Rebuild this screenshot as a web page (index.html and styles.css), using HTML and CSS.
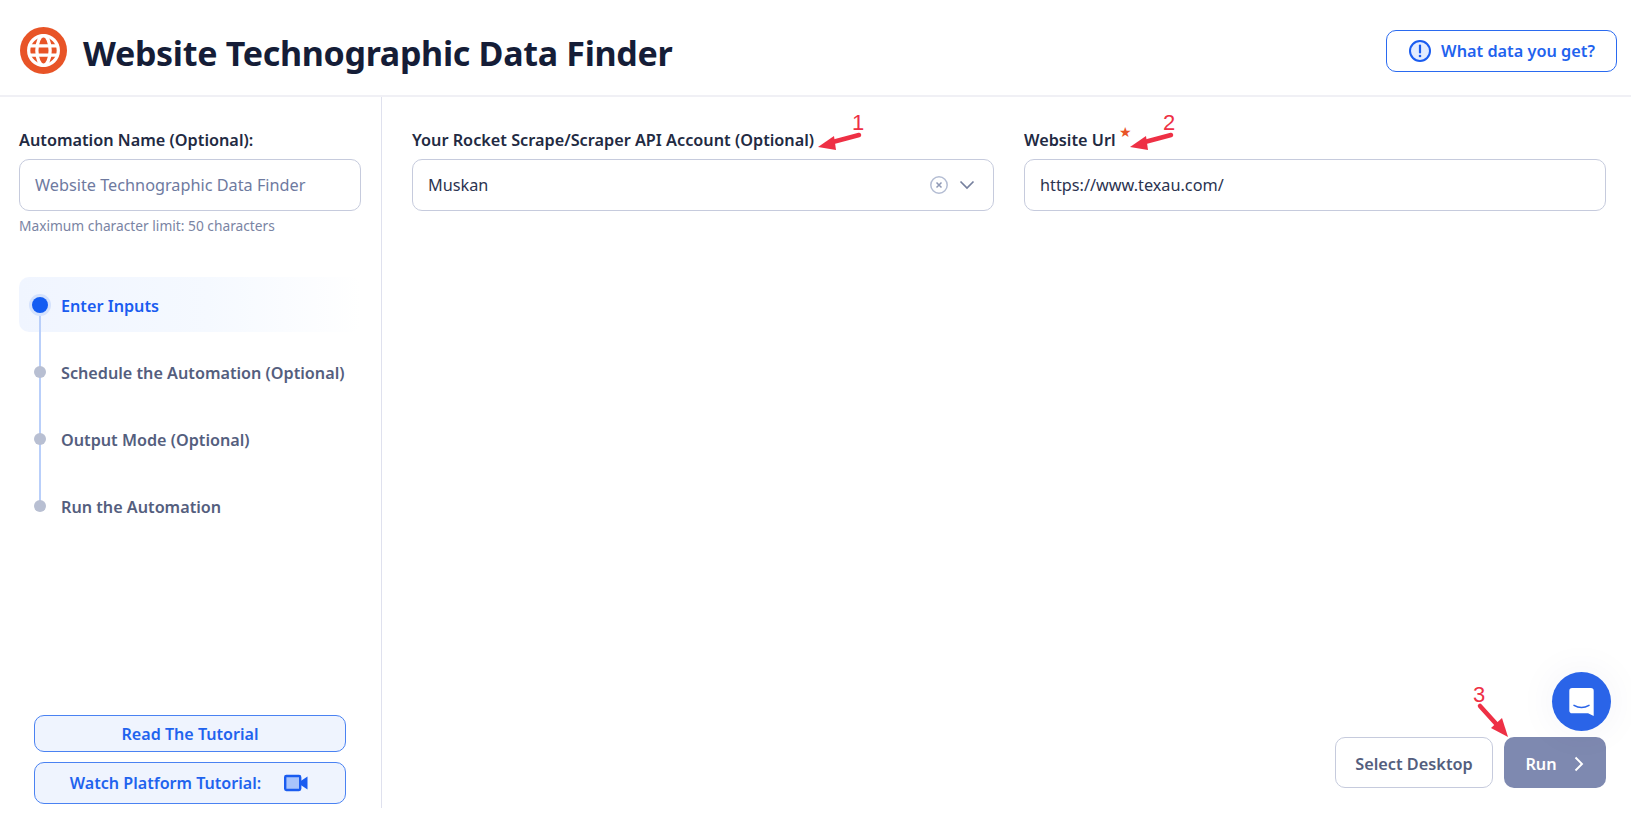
FILE: index.html
```html
<!DOCTYPE html>
<html lang="en">
<head>
<meta charset="utf-8">
<title>Website Technographic Data Finder</title>
<link rel="stylesheet" href="styles.css">
</head>
<body>
<header class="topbar">
  <div class="brand">
    <svg class="brand-icon" viewBox="0 0 46 46">
      <circle cx="23" cy="23" r="23" fill="#e85427"/>
      <g fill="none" stroke="#fff" stroke-width="3.2">
        <circle cx="23" cy="23" r="14.5"/>
        <ellipse cx="23" cy="23" rx="6.5" ry="14.5"/>
        <path d="M9.5 18.5h27M9.5 27.5h27"/>
      </g>
    </svg>
    <h1 class="title">Website Technographic Data Finder</h1>
  </div>
  <button class="info-btn">
    <svg class="info-icon" viewBox="0 0 24 24">
      <circle cx="12" cy="12" r="10" fill="#e3ecff" stroke="#1a5cf0" stroke-width="2"/>
      <path d="M12 6.5v7" stroke="#1a5cf0" stroke-width="2.2" stroke-linecap="round"/>
      <circle cx="12" cy="17" r="1.3" fill="#1a5cf0"/>
    </svg>
    <span class="info-text">What data you get?</span>
  </button>
</header>
<div class="workspace">
  <aside class="sidebar">
    <div class="name-block">
      <label class="label">Automation Name (Optional):</label>
      <div class="field placeholder">Website Technographic Data Finder</div>
      <p class="hint">Maximum character limit: 50 characters</p>
    </div>
    <ol class="steps">
      <li class="step active"><span class="dot"></span>Enter Inputs</li>
      <li class="step"><span class="dot"></span>Schedule the Automation (Optional)</li>
      <li class="step"><span class="dot"></span>Output Mode (Optional)</li>
      <li class="step last"><span class="dot"></span>Run the Automation</li>
    </ol>
    <div class="tutorials">
      <button class="tut-btn short">Read The Tutorial</button>
      <button class="tut-btn tall">Watch Platform Tutorial:
        <svg class="video-icon" viewBox="0 0 24 18">
          <rect x="1.2" y="2" width="15" height="14" rx="1.2" fill="#a9c4fb" stroke="#1a5cf0" stroke-width="2.4"/>
          <path d="M16 7.5 23.5 2.5v13l-7.5-5z" fill="#1a5cf0"/>
        </svg>
      </button>
    </div>
  </aside>
  <main class="content">
    <div class="form-grid">
      <div class="form-col">
        <label class="label">Your Rocket Scrape/Scraper API Account (Optional)</label>
        <div class="field select">
          <span>Muskan</span>
          <span class="select-icons">
            <svg class="clear-icon" viewBox="0 0 20 20" fill="none" stroke="#b4bdd3" stroke-width="1.5">
              <circle cx="10" cy="10" r="8.2"/>
              <path d="M7.5 7.5l5 5M12.5 7.5l-5 5" stroke="#8f99b5"/>
            </svg>
            <svg class="chev-icon" viewBox="0 0 16 10" fill="none" stroke="#76809e" stroke-width="1.7">
              <path d="M1.5 1.5 8 8l6.5-6.5"/>
            </svg>
          </span>
        </div>
      </div>
      <div class="form-col">
        <label class="label">Website Url</label>
        <div class="field">https://www.texau.com/</div>
      </div>
    </div>
    <div class="actions">
      <button class="btn-outline">Select Desktop</button>
      <button class="btn-run">Run
        <svg class="run-chev" viewBox="0 0 10 16" fill="none" stroke="#fff" stroke-width="1.9"><path d="M1.5 1.5 8 8l-6.5 6.5"/></svg>
      </button>
    </div>
  </main>
</div>

<span class="req-star">★</span>
<span class="mark mark-1">1</span>
<span class="mark mark-2">2</span>
<span class="mark mark-3">3</span>
<svg class="arrows" viewBox="0 0 1631 818" fill="#ee3045" stroke="none">
  <path d="M859 135 829 143" stroke="#ee3045" stroke-width="4.5" stroke-linecap="round"/>
  <path d="M818 147 834 136 836 150z"/>
  <path d="M1171 135 1141 143" stroke="#ee3045" stroke-width="4.5" stroke-linecap="round"/>
  <path d="M1130 147 1146 136 1148 150z"/>
  <path d="M1480 706 1499 727" stroke="#ee3045" stroke-width="4.5" stroke-linecap="round"/>
  <path d="M1508 737 1491 728 1502 718z"/>
</svg>
<button class="chat-bubble" aria-label="Chat">
  <svg viewBox="0 0 28 32" class="chat-icon">
    <path d="M4 1h20a3 3 0 0 1 3 3v27l-6-3H4a3 3 0 0 1-3-3V4a3 3 0 0 1 3-3z" fill="#fff"/>
    <path d="M6 19.5c5 3 11 3 16 0" fill="none" stroke="#2a64e8" stroke-width="1.6" stroke-linecap="round"/>
  </svg>
</button>
</body>
</html>
```
FILE: styles.css
```css
* { box-sizing: border-box; }
html, body { margin: 0; height: 818px; overflow: hidden; }
body {
  position: relative;
  background: #fff;
  font-family: "Noto Sans", "Open Sans", sans-serif;
  color: #1a2238;
}
button { font-family: inherit; cursor: pointer; }

.topbar {
  height: 97px;
  border-bottom: 2px solid #f0f0f5;
  padding: 6px 14px 0 20px;
  display: flex;
  align-items: center;
  justify-content: space-between;
}
.brand { display: flex; align-items: center; gap: 16px; }
.brand-icon { width: 47px; height: 47px; display: block; }
.title {
  margin: 0;
  padding-top: 4px;
  font-size: 34px;
  line-height: 46px;
  font-weight: 700;
  letter-spacing: -0.3px;
  color: #151d37;
}
.info-btn {
  width: 231px;
  height: 42px;
  background: #fff;
  border: 1px solid #2a6af0;
  border-radius: 10px;
  color: #1f63ee;
  font-size: 16.3px;
  font-weight: 600;
  display: flex;
  align-items: center;
  justify-content: center;
  gap: 9px;
  padding: 0;
}
.info-text { padding-top: 1px; }
.info-icon { width: 24px; height: 24px; }

.workspace { display: flex; height: 711px; }
.sidebar {
  width: 382px;
  border-right: 1px solid #dfe1ee;
  padding: 32px 20px 4px 19px;
  display: flex;
  flex-direction: column;
}
.label {
  display: block;
  font-size: 16.25px;
  line-height: 22px;
  font-weight: 600;
  color: #222a42;
  margin-bottom: 8px;
  white-space: nowrap;
}
.field {
  height: 52px;
  border: 1px solid #c6cbdd;
  border-radius: 10px;
  padding: 0 15px;
  display: flex;
  align-items: center;
  font-size: 16.25px;
  color: #2b3350;
  background: #fff;
}
.placeholder { color: #6e7a9f; width: 342px; white-space: nowrap; }
.hint { margin: 6px 0 0; font-size: 13.75px; line-height: 18px; color: #7a84a3; }

.steps { list-style: none; margin: 42px 0 0; padding: 0; width: 342px; }
.step {
  position: relative;
  height: 55px;
  margin-bottom: 12px;
  padding: 2px 0 0 42px;
  display: flex;
  align-items: center;
  font-size: 16.2px;
  font-weight: 600;
  color: #545e7e;
  white-space: nowrap;
  border-radius: 10px;
}
.step::before {
  content: "";
  position: absolute;
  left: 20px;
  top: 28px;
  width: 2px;
  height: 67px;
  background: #b9cffa;
}
.step.last::before { display: none; }
.dot {
  position: absolute;
  left: 15px;
  top: 22px;
  width: 12px;
  height: 12px;
  border-radius: 50%;
  background: #b8bfd2;
  z-index: 1;
}
.step.active {
  color: #1a5cf0;
  background: linear-gradient(90deg, #f0f5ff 0%, #f5f9ff 55%, #fff 100%);
}
.step.active .dot {
  left: 13px;
  top: 20px;
  width: 16px;
  height: 16px;
  background: #135cf2;
  box-shadow: 0 0 0 3px #d4e2fd;
}

.tutorials {
  margin-top: auto;
  padding-left: 15px;
  display: flex;
  flex-direction: column;
  gap: 10px;
}
.tut-btn {
  width: 312px;
  background: #eff4fe;
  border: 1px solid #4a82f2;
  border-radius: 10px;
  color: #1f63ee;
  font-size: 16.1px;
  font-weight: 600;
  padding: 0;
  display: flex;
  align-items: center;
  justify-content: center;
}
.tut-btn.short { height: 37px; }
.tut-btn.tall { height: 42px; gap: 23px; padding-right: 2px; }
.video-icon { width: 24px; height: 18px; }

.content {
  flex: 1;
  padding: 32px 25px 20px 30px;
  display: flex;
  flex-direction: column;
  justify-content: space-between;
}
.form-grid { display: grid; grid-template-columns: 1fr 1fr; gap: 30px; }
.select { justify-content: space-between; padding-right: 18px; }
.select-icons { display: flex; align-items: center; gap: 10px; }
.clear-icon { width: 20px; height: 20px; }
.chev-icon { width: 16px; height: 10px; }

.actions { display: flex; justify-content: flex-end; gap: 11px; }
.btn-outline {
  width: 158px;
  height: 51px;
  background: #fff;
  border: 1px solid #c6cbdd;
  border-radius: 10px;
  color: #545e7e;
  font-size: 16.3px;
  font-weight: 600;
  padding: 2px 0 0;
}
.btn-run {
  width: 102px;
  height: 51px;
  background: #7e89b0;
  border: 0;
  border-radius: 10px;
  color: #fff;
  font-size: 16.3px;
  font-weight: 600;
  display: flex;
  align-items: center;
  justify-content: center;
  gap: 17px;
  padding: 2px 1px 0 0;
}
.run-chev { width: 10px; height: 16px; }

.req-star { position: absolute; left: 1119px; top: 123px; font-size: 14px; line-height: 18px; color: #e85427; }
.mark { position: absolute; font-family: "Liberation Sans", sans-serif; font-size: 22px; line-height: 24px; color: #ee3045; }
.mark-1 { left: 852px; top: 111px; }
.mark-2 { left: 1163px; top: 111px; }
.mark-3 { left: 1473px; top: 683px; }
.arrows { position: absolute; left: 0; top: 0; width: 1631px; height: 818px; pointer-events: none; }
.chat-bubble {
  position: absolute;
  left: 1552px;
  top: 672px;
  width: 59px;
  height: 59px;
  border: 0;
  border-radius: 50%;
  background: #2a64e8;
  display: flex;
  align-items: center;
  justify-content: center;
  box-shadow: 0 0 40px rgba(30, 50, 120, 0.06);
  padding: 0;
}
.chat-icon { width: 27px; height: 30px; }
```
